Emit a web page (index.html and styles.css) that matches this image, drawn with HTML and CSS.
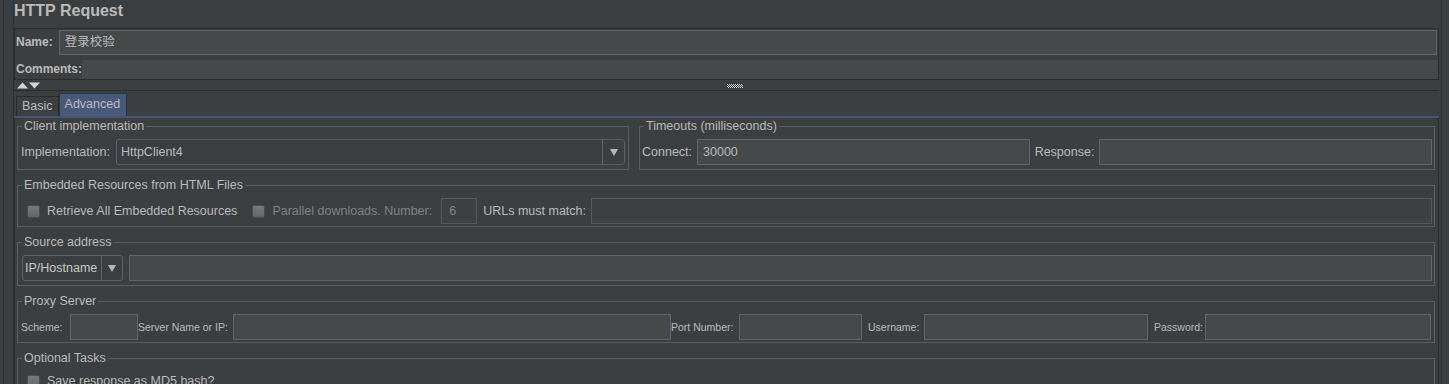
FILE: index.html
```html
<!DOCTYPE html>
<html lang="en">
<head>
    <meta charset="UTF-8">
    <title>HTTP Request</title>
    <link rel="stylesheet" href="styles.css">
</head>
<body>
    <div class="frame">
        <div class="main">
            <h1 class="title">HTTP Request</h1>

            <div class="name-panel">
                <div class="name-row">
                    <span class="label label-bold">Name:</span>
                    <div class="field name-field">登录校验</div>
                </div>
                <div class="comments-row">
                    <span class="label label-bold">Comments:</span>
                    <div class="comments-area"></div>
                </div>
            </div>

            <div class="splitter">
                <svg class="arrows" width="24" height="7" viewBox="0 0 24 7">
                    <polygon points="0,6.5 5.5,0.5 11,6.5" />
                    <polygon points="12,0.5 23,0.5 17.5,6.5" />
                </svg>
                <svg class="grip" width="16" height="4" viewBox="0 0 16 4">
                    <defs>
                        <pattern id="checker" width="2" height="2" patternUnits="userSpaceOnUse">
                            <rect x="0" y="0" width="1" height="1" fill="#e0e0e0" />
                            <rect x="1" y="1" width="1" height="1" fill="#e0e0e0" />
                            <rect x="1" y="0" width="1" height="1" fill="#2a2a2a" />
                            <rect x="0" y="1" width="1" height="1" fill="#2a2a2a" />
                        </pattern>
                    </defs>
                    <rect width="16" height="4" fill="url(#checker)" />
                </svg>
            </div>

            <div class="tabs">
                <div class="tab">Basic</div>
                <div class="tab tab-active">Advanced</div>
            </div>

            <div class="tab-panel">
                <div class="group-row">
                    <fieldset class="group group-client">
                        <legend>Client implementation</legend>
                        <div class="impl-row">
                            <span class="label">Implementation:</span>
                            <div class="combo combo-wide">
                                <span class="combo-value">HttpClient4</span>
                                <span class="combo-arrow">
                                    <svg width="8" height="7" viewBox="0 0 8 7"><polygon points="0,0 8,0 4,7" /></svg>
                                </span>
                            </div>
                        </div>
                    </fieldset>

                    <fieldset class="group group-timeouts">
                        <legend>Timeouts (milliseconds)</legend>
                        <div class="timeouts-row">
                            <span class="label">Connect:</span>
                            <div class="field">30000</div>
                            <span class="label">Response:</span>
                            <div class="field"></div>
                        </div>
                    </fieldset>
                </div>

                <fieldset class="group group-tight">
                    <legend>Embedded Resources from HTML Files</legend>
                    <div class="embed-row">
                        <span class="check"></span>
                        <span class="label check-label">Retrieve All Embedded Resources</span>
                        <span class="check check-second"></span>
                        <span class="label check-label disabled">Parallel downloads. Number:</span>
                        <div class="field field-dim num-field disabled">6</div>
                        <span class="label urls-label">URLs must match:</span>
                        <div class="field field-dim urls-field"></div>
                    </div>
                </fieldset>

                <fieldset class="group">
                    <legend>Source address</legend>
                    <div class="source-row">
                        <div class="combo combo-small">
                            <span class="combo-value">IP/Hostname</span>
                            <span class="combo-arrow">
                                <svg width="8" height="7" viewBox="0 0 8 7"><polygon points="0,0 8,0 4,7" /></svg>
                            </span>
                        </div>
                        <div class="field source-field"></div>
                    </div>
                </fieldset>

                <fieldset class="group group-tight">
                    <legend>Proxy Server</legend>
                    <div class="proxy-row">
                        <span class="small-label">Scheme:</span>
                        <div class="field"></div>
                        <span class="small-label">Server Name or IP:</span>
                        <div class="field"></div>
                        <span class="small-label">Port Number:</span>
                        <div class="field"></div>
                        <span class="small-label pad">Username:</span>
                        <div class="field"></div>
                        <span class="small-label pad">Password:</span>
                        <div class="field"></div>
                    </div>
                </fieldset>

                <fieldset class="group group-optional">
                    <legend>Optional Tasks</legend>
                    <div class="embed-row">
                        <span class="check"></span>
                        <span class="label check-label">Save response as MD5 hash?</span>
                    </div>
                </fieldset>
            </div>
        </div>
    </div>
</body>
</html>
```

FILE: styles.css
```css
* {
    box-sizing: border-box;
}
body {
    margin: 0;
    background-color: #3c3f41;
    color: #bbbbbb;
    font-family: "Liberation Sans", Arial, sans-serif;
    font-size: 12.5px;
    overflow: hidden;
}
.frame {
    height: 384px;
    margin: 0 7px 0 3px;
    padding-left: 9px;
    border-left: 1px solid #2d2f31;
    border-right: 1px solid #2d2f31;
}
.main {
    height: 100%;
    padding-right: 2px;
    border-left: 1px solid #2d2f31;
}
.title {
    margin: 0 0 8px;
    padding-top: 1px;
    font-size: 16px;
    line-height: 19px;
    font-weight: bold;
}
.label {
    white-space: nowrap;
    line-height: 15px;
}
.label-bold {
    font-size: 12px;
    font-weight: bold;
}

/* text fields */
.field {
    height: 26px;
    padding: 0 5px;
    background-color: #45494a;
    border: 1px solid #646464;
    line-height: 24px;
    white-space: nowrap;
    overflow: hidden;
}
.field-dim {
    background-color: #3e4143;
    border-color: #565a5c;
}
.disabled {
    color: #808283;
}

/* name / comments */
.name-panel {
    height: 52px;
    padding: 1px 0 0 1px;
    border: 1px solid #2b2b2b;
}
.name-row {
    display: flex;
    align-items: center;
    height: 25px;
}
.name-field {
    flex: 1;
    height: 25px;
    margin: 0 1px 0 6px;
    font-family: "Liberation Sans", "Noto Sans CJK SC", sans-serif;
    line-height: 23px;
}
.comments-row {
    display: flex;
    align-items: center;
    height: 19px;
    margin-top: 5px;
}
.comments-area {
    flex: 1;
    align-self: stretch;
    background-color: #45494a;
}

/* splitter between the name panel and the tabs */
.splitter {
    display: flex;
    align-items: flex-start;
    height: 11px;
    padding: 2px 0 0 3px;
    border-bottom: 1px solid #2b2b2b;
}
.arrows polygon {
    fill: #d4d4d4;
}
.grip {
    margin: 2px 0 0 686px;
}

/* tabs */
.tabs {
    display: flex;
    align-items: flex-end;
    height: 27px;
    padding-left: 2px;
    border-bottom: 2px solid #455573;
}
.tab {
    height: 20px;
    padding: 0 5px;
    line-height: 19px;
    border: 1px solid #2b2b2b;
    border-bottom: none;
}
.tab-active {
    height: 23px;
    padding: 0 6px 0 5px;
    line-height: 21px;
    background-color: #485a7b;
    border-color: #2f3236;
}
.tab-panel {
    height: 300px;
    padding: 1px 3px 0 2px;
    border-left: 1px solid #2b2b2b;
    border-right: 1px solid #2b2b2b;
}

/* titled groups */
.group {
    min-width: 0;
    margin: 0 0 8px;
    padding: 6px 0 4px;
    border: 1px solid #5c5f61;
}
.group legend {
    margin-left: 4px;
    padding: 0 2px;
    line-height: 14px;
}
.group-tight {
    padding-bottom: 2px;
}
.group-row {
    display: flex;
    gap: 10px;
    margin-bottom: 8px;
}
.group-row .group {
    margin: 0;
}
.group-client {
    flex: none;
    width: 612px;
}
.group-timeouts {
    flex: 1;
}
.group-optional {
    padding-top: 3px;
}

/* combo boxes */
.combo {
    display: flex;
    height: 26px;
    border: 1px solid #5e6163;
    border-radius: 3px;
}
.combo-value {
    flex: 1;
    line-height: 24px;
    white-space: nowrap;
}
.combo-arrow {
    display: flex;
    align-items: center;
    justify-content: center;
    border-left: 1px solid #5e6163;
}
.combo-arrow polygon {
    fill: #b8b8b8;
}
.combo-wide {
    flex: 1;
    margin-left: 6px;
}
.combo-wide .combo-value {
    padding-left: 4px;
}
.combo-wide .combo-arrow {
    width: 22px;
}
.combo-small {
    flex: none;
    width: 101px;
}
.combo-small .combo-value {
    padding-left: 2px;
    color: #c8c8c8;
}
.combo-small .combo-arrow {
    width: 21px;
}

/* rows inside the groups */
.impl-row {
    display: flex;
    align-items: center;
    padding: 0 3px;
}
.timeouts-row {
    display: grid;
    grid-template-columns: auto 1fr auto 1fr;
    column-gap: 5px;
    align-items: center;
    padding: 0 2px;
}
.embed-row {
    display: flex;
    align-items: center;
    height: 26px;
    padding: 0 2px 0 9px;
}
.check {
    flex: none;
    width: 13px;
    height: 13px;
    border: 1px solid #4a4d4f;
    border-radius: 2px;
    background: linear-gradient(#77797b, #636668);
}
.check-label {
    margin-left: 7px;
}
.check-second {
    margin-left: 15px;
}
.num-field {
    width: 36px;
    margin-left: 9px;
    padding-left: 7px;
}
.urls-label {
    margin-left: 6px;
}
.urls-field {
    flex: 1;
    margin-left: 5px;
}
.source-row {
    display: flex;
    align-items: center;
    padding: 0 2px 0 4px;
}
.source-field {
    flex: 1;
    margin-left: 6px;
}
.proxy-row {
    display: grid;
    grid-template-columns: 49px 68px 95px 438px 68px 123px 62px 224px 57px 226px;
    align-items: center;
    padding-left: 3px;
}
.small-label {
    font-size: 10.5px;
    white-space: nowrap;
}
.small-label.pad {
    padding-left: 6px;
}
```
